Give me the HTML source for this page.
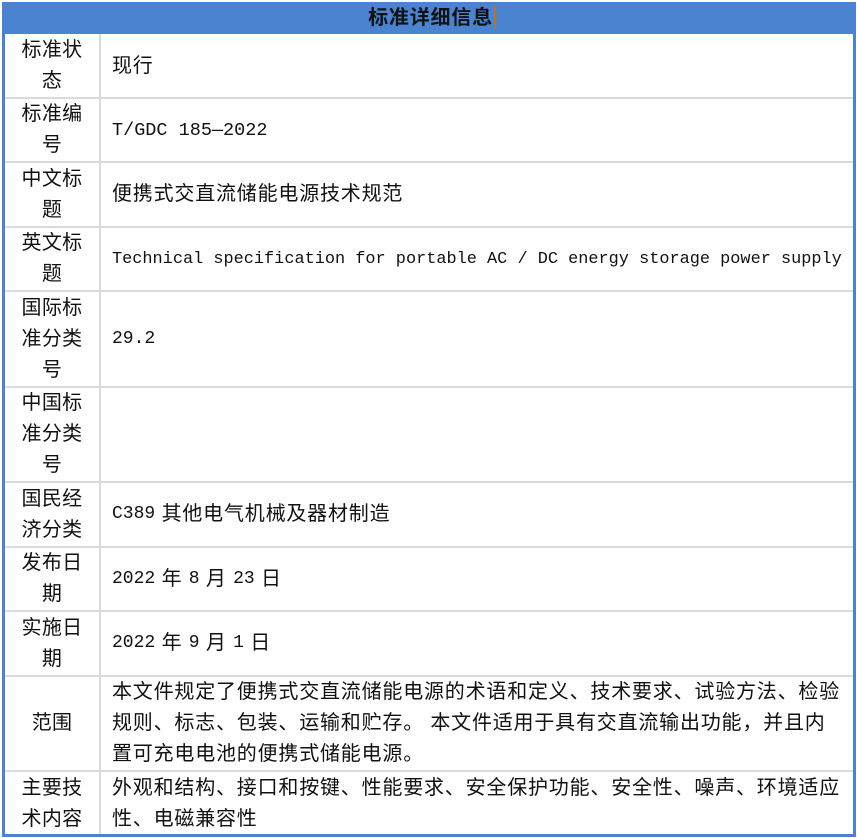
<!DOCTYPE html>
<html><head><meta charset="utf-8"><style>
*{margin:0;padding:0;box-sizing:border-box}
body{width:857px;height:838px;background:#fff;position:relative;overflow:hidden;font-family:"Liberation Sans","Noto Sans CJK SC",sans-serif;color:#111;font-size:20px;letter-spacing:0.8px}
.frame{position:absolute;left:2px;top:2px;width:854px;height:835px;border:3px solid #4a84d0;border-top:none}
.hdr{position:absolute;left:2px;top:2px;width:854px;height:32px;background:#4a84d0;text-align:center;font-weight:bold;font-size:20px;line-height:32px;color:#111;padding-left:6px}
.cur{display:inline-block;width:2px;height:22px;background:#c07020;vertical-align:-4px;margin-left:1px}
.hl{position:absolute;left:5px;width:848px;height:2px;background:#dadada}
.vl{position:absolute;left:99px;top:34px;width:2px;height:800px;background:#dadada}
.lab{position:absolute;left:5px;width:94px;text-align:center;line-height:31px;display:flex;align-items:center;justify-content:center;letter-spacing:0.3px}
.lab span{display:block;width:66px}
.val{position:absolute;left:112px;width:740px;line-height:31px;display:flex;align-items:center}
.val>div{width:100%}
.m{font-family:"Liberation Mono","Noto Sans CJK SC",monospace;font-size:18px;letter-spacing:0}
</style></head><body>
<div class="frame"></div>
<div class="hdr">标准详细信息<span class="cur"></span></div>
<div class="vl"></div>
<div class="hl" style="top:97px"></div>
<div class="hl" style="top:161px"></div>
<div class="hl" style="top:226px"></div>
<div class="hl" style="top:290px"></div>
<div class="hl" style="top:386px"></div>
<div class="hl" style="top:481px"></div>
<div class="hl" style="top:546px"></div>
<div class="hl" style="top:610px"></div>
<div class="hl" style="top:675px"></div>
<div class="hl" style="top:770px"></div>

<div class="lab" style="top:35px;height:62px"><span>标准状态</span></div>
<div class="val" style="top:35px;height:62px">现行</div>
<div class="lab" style="top:99px;height:62px"><span>标准编号</span></div>
<div class="val m" style="top:99px;height:62px;font-size:18.5px">T/GDC 185—2022</div>
<div class="lab" style="top:163px;height:63px"><span>中文标题</span></div>
<div class="val" style="top:163px;height:63px">便携式交直流储能电源技术规范</div>
<div class="lab" style="top:228px;height:62px"><span>英文标题</span></div>
<div class="val m" style="top:228px;height:62px;font-size:16.9px;white-space:nowrap">Technical specification for portable AC / DC energy storage power supply</div>
<div class="lab" style="top:292px;height:94px"><span>国际标准分类号</span></div>
<div class="val m" style="top:292px;height:94px">29.2</div>
<div class="lab" style="top:388px;height:93px"><span>中国标准分类号</span></div>
<div class="lab" style="top:483px;height:63px"><span>国民经济分类</span></div>
<div class="val" style="top:483px;height:63px"><span class="m">C389</span>&nbsp;其他电气机械及器材制造</div>
<div class="lab" style="top:548px;height:62px"><span>发布日期</span></div>
<div class="val" style="top:548px;height:62px"><span class="m">2022</span>&nbsp;年&nbsp;<span class="m">8</span>&nbsp;月&nbsp;<span class="m">23</span>&nbsp;日</div>
<div class="lab" style="top:612px;height:63px"><span>实施日期</span></div>
<div class="val" style="top:612px;height:63px"><span class="m">2022</span>&nbsp;年&nbsp;<span class="m">9</span>&nbsp;月&nbsp;<span class="m">1</span>&nbsp;日</div>
<div class="lab" style="top:677px;height:93px"><span>范围</span></div>
<div class="val" style="top:677px;height:93px"><div>本文件规定了便携式交直流储能电源的术语和定义、技术要求、试验方法、检验<br>规则、标志、包装、运输和贮存。 本文件适用于具有交直流输出功能，并且内<br>置可充电电池的便携式储能电源。</div></div>
<div class="lab" style="top:772px;height:63px"><span>主要技术内容</span></div>
<div class="val" style="top:772px;height:63px"><div>外观和结构、接口和按键、性能要求、安全保护功能、安全性、噪声、环境适应<br>性、电磁兼容性</div></div>
</body></html>
